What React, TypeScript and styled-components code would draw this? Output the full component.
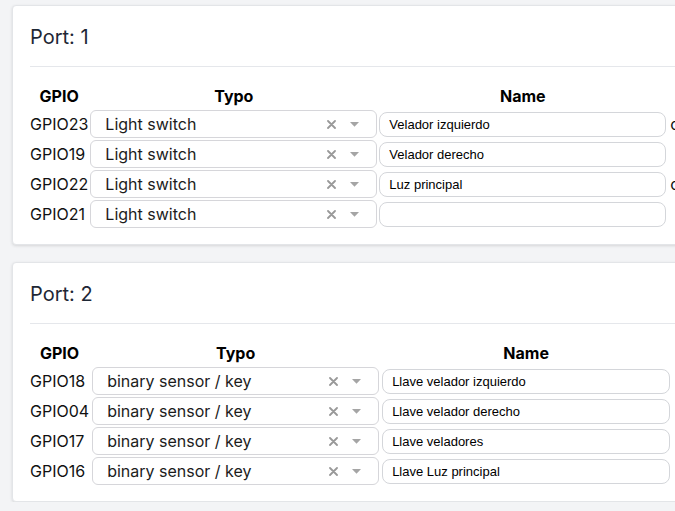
import React from "react";
import styled, { createGlobalStyle } from "styled-components";

const Global = createGlobalStyle`
  html, body { margin: 0; padding: 0; overflow: hidden; background: #f3f4f6; }
  body { font-family: Inter, "Noto Sans", sans-serif; color: #111; }
`;

const Page = styled.div`
  display: flex;
  flex-direction: column;
  gap: 17px;
  padding: 5px 0 0 12px;
  width: 760px;
`;

const Card = styled.section`
  background: #fff;
  border: 1px solid #e3e5e8;
  border-radius: 4px;
  box-shadow: 0 1px 3px rgba(0, 0, 0, 0.12);
  padding: 17px 17px 16px;
`;

const Title = styled.h2`
  margin: 0;
  font-size: 20px;
  line-height: 28px;
  font-weight: 400;
  color: #1e2735;
`;

const Divider = styled.hr`
  margin: 15px 0 16px;
  border: 0;
  border-top: 1px solid #e5e7eb;
`;

const Grid = styled.div<{ $nameWidth: number; $gap: number }>`
  display: grid;
  grid-template-columns: max-content 287px ${(p) => p.$nameWidth}px max-content;
  column-gap: ${(p) => p.$gap}px;
  row-gap: 2px;
  align-items: center;
`;

const Head = styled.div`
  font-weight: 700;
  font-size: 16px;
  line-height: 24px;
  text-align: center;
  color: #000;
  padding-top: 1px;
`;

const Label = styled.div`
  font-size: 16px;
  line-height: 24px;
  color: #111;
`;

const Select = styled.div`
  height: 28px;
  box-sizing: border-box;
  border: 1px solid #d6d6da;
  border-radius: 6px;
  display: flex;
  align-items: center;
  padding: 0 17px 0 14px;
  font-size: 16px;
  color: #1c1c1c;
`;

const SelectValue = styled.span`
  flex: 1;
  white-space: nowrap;
`;

const Indicators = styled.span`
  display: flex;
  align-items: center;
  gap: 14px;
  color: #999;
`;

const NameInput = styled.input`
  height: 25px;
  box-sizing: border-box;
  width: 100%;
  border: 1px solid #d4d6da;
  border-radius: 8px;
  padding: 0 9px;
  font-family: "Liberation Sans", Arial, sans-serif;
  font-size: 13px;
  color: #000;
  background: #fff;
  outline: none;
`;

const Extra = styled.div`
  font-size: 16px;
  line-height: 24px;
  color: #111;
  padding-left: 2px;
  white-space: nowrap;
`;

const Cross = () => (
  <svg width="9" height="9" viewBox="0 0 9 9">
    <path d="M1 1L8 8M8 1L1 8" stroke="#999" strokeWidth="1.8" strokeLinecap="round" />
  </svg>
);

const Caret = () => (
  <svg width="9" height="5" viewBox="0 0 9 5">
    <path d="M0 0H9L4.5 4.8Z" fill="#a5a5a5" />
  </svg>
);

type Row = { gpio: string; type: string; name: string; extra?: string };

const ports: { port: number; nameWidth: number; gap: number; rows: Row[] }[] = [
  {
    port: 1,
    nameWidth: 287,
    gap: 2,
    rows: [
      { gpio: "GPIO23", type: "Light switch", name: "Velador izquierdo", extra: "conectado" },
      { gpio: "GPIO19", type: "Light switch", name: "Velador derecho" },
      { gpio: "GPIO22", type: "Light switch", name: "Luz principal", extra: "conectado" },
      { gpio: "GPIO21", type: "Light switch", name: "" },
    ],
  },
  {
    port: 2,
    nameWidth: 288,
    gap: 3,
    rows: [
      { gpio: "GPIO18", type: "binary sensor / key", name: "Llave velador izquierdo" },
      { gpio: "GPIO04", type: "binary sensor / key", name: "Llave velador derecho" },
      { gpio: "GPIO17", type: "binary sensor / key", name: "Llave veladores" },
      { gpio: "GPIO16", type: "binary sensor / key", name: "Llave Luz principal" },
    ],
  },
];

export default function App() {
  return (
    <>
      <Global />
      <Page>
        {ports.map((p) => (
          <Card key={p.port}>
            <Title>Port: {p.port}</Title>
            <Divider />
            <Grid $nameWidth={p.nameWidth} $gap={p.gap}>
              <Head>GPIO</Head>
              <Head>Typo</Head>
              <Head>Name</Head>
              <div />
              {p.rows.map((r) => (
                <React.Fragment key={r.gpio}>
                  <Label>{r.gpio}</Label>
                  <Select>
                    <SelectValue>{r.type}</SelectValue>
                    <Indicators>
                      <Cross />
                      <Caret />
                    </Indicators>
                  </Select>
                  <NameInput defaultValue={r.name} />
                  <Extra>{r.extra ?? ""}</Extra>
                </React.Fragment>
              ))}
            </Grid>
          </Card>
        ))}
      </Page>
    </>
  );
}
